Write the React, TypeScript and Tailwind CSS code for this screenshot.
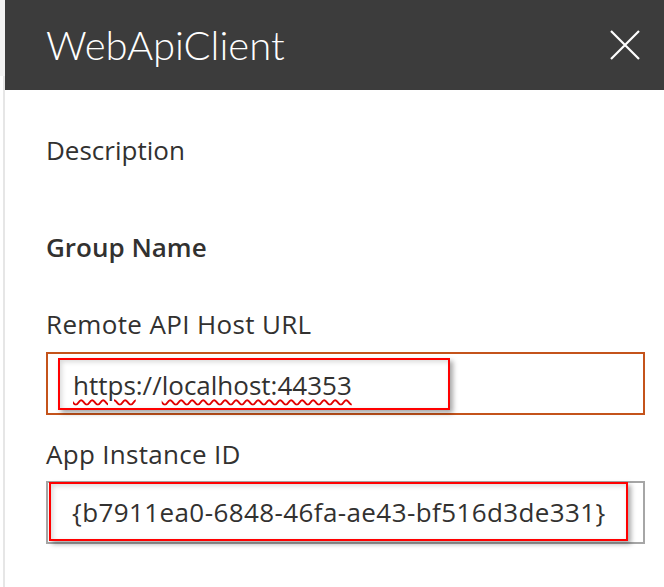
import React from "react";

export default function App() {
  const font = { fontFamily: "'Open Sans', 'Noto Sans', sans-serif" };
  return (
    <div className="flex h-[587px] w-[664px] overflow-hidden bg-white text-[#323130]" style={font}>
      <div className="flex w-[5px] shrink-0 flex-col">
        <div className="h-[76px] bg-[#f3f3f3]" />
        <div className="flex flex-1">
          <div className="w-[3px] bg-white" />
          <div className="w-[2px] bg-[#e6e6e6]" />
        </div>
      </div>
      <div className="flex flex-1 flex-col">
        <div className="flex h-[90px] items-center justify-between bg-[#3c3c3c] pl-[41px] pr-[24px]">
          <span className="text-[40px] font-light leading-none text-white" style={{ fontFamily: "Lato, 'Open Sans', sans-serif" }}>WebApiClient</span>
          <svg width="30" height="30" viewBox="0 0 30 30" className="text-white">
            <path d="M1 1 L29 29 M29 1 L1 29" stroke="currentColor" strokeWidth="2.2" fill="none" />
          </svg>
        </div>
        <div className="flex flex-col pl-[41px] pr-[19px]">
          <div className="mt-[44px] text-[26px] leading-[32px]">Description</div>
          <div className="mt-[65px] text-[26px] font-semibold leading-[32px]">Group Name</div>
          <div className="mt-[45px] text-[26px] leading-[32px] tracking-[0.35px]">Remote API Host URL</div>
          <div className="mt-[12px] flex h-[63px] items-start border-2 border-[#c4531b] pl-[10px] pt-[4px]">
            <div className="flex h-[52px] w-[392px] items-center border-2 border-[#ff0000] pl-[13px] pt-[2px] text-[26px] shadow-[3px_3px_5px_rgba(0,0,0,0.35),inset_2px_2px_5px_rgba(0,0,0,0.15)]">
              <span className="underline decoration-[#e00000] decoration-wavy decoration-[1.5px] underline-offset-[4px]">https</span>
              <span>://</span>
              <span className="underline decoration-[#e00000] decoration-wavy decoration-[1.5px] underline-offset-[4px]">localhost:44353</span>
            </div>
          </div>
          <div className="mt-[23px] text-[26px] leading-[32px] tracking-[0.3px]">App Instance ID</div>
          <div className="mt-[11px] flex h-[63px] items-start border-2 border-[#a6a6a6] pl-[1px]">
            <div className="-mt-[1px] flex h-[59px] w-[579px] items-center border-2 border-[#ff0000] pl-[21px] pt-[1px] text-[26px] tracking-[0.4px] shadow-[3px_3px_5px_rgba(0,0,0,0.35),inset_2px_2px_5px_rgba(0,0,0,0.15)]">
              {"{b7911ea0-6848-46fa-ae43-bf516d3de331}"}
            </div>
          </div>
        </div>
      </div>
    </div>
  );
}
